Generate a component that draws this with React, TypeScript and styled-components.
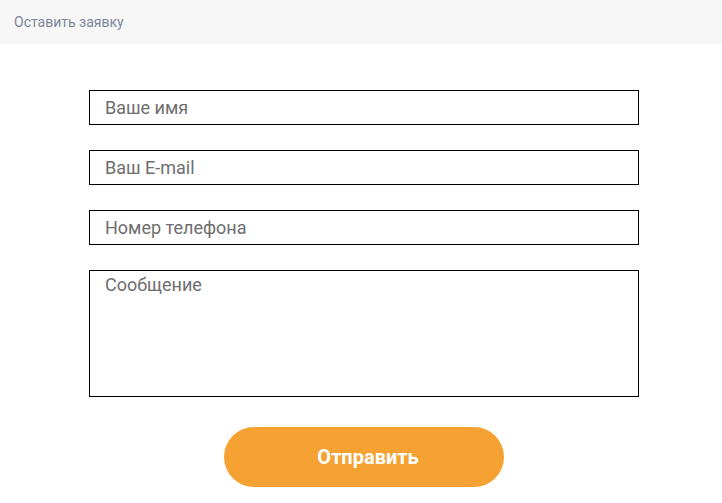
import React from "react";
import styled, { createGlobalStyle } from "styled-components";

const Global = createGlobalStyle`
  html, body { margin: 0; padding: 0; background: #fff; }
  body { font-family: Roboto, "Liberation Sans", Arial, sans-serif; }
  * { box-sizing: border-box; }
`;

const Header = styled.div`
  height: 44px;
  background: #f7f7f7;
  display: flex;
  align-items: center;
  padding-left: 14px;
  font-size: 14px;
  color: #80869a;
`;

const Form = styled.form`
  width: 550px;
  margin: 46px 0 0 89px;
  display: flex;
  flex-direction: column;
  gap: 25px;
`;

const Field = styled.input`
  width: 100%;
  height: 35px;
  border: 1px solid #000;
  border-radius: 0;
  padding: 0 15px;
  font-family: Roboto, "Liberation Sans", Arial, sans-serif;
  font-size: 18px;
  color: #333;
  outline: none;
  &::placeholder { color: #6e6e6e; opacity: 1; }
`;

const Area = styled.textarea`
  width: 100%;
  height: 127px;
  border: 1px solid #000;
  border-radius: 0;
  padding: 3px 15px;
  font-family: Roboto, "Liberation Sans", Arial, sans-serif;
  font-size: 18px;
  line-height: 22px;
  resize: none;
  outline: none;
  display: block;
  &::placeholder { color: #6e6e6e; opacity: 1; }
`;

const Actions = styled.div`
  display: flex;
  padding-left: 135px;
  margin-top: 5px;
`;

const Submit = styled.button`
  width: 280px;
  height: 60px;
  border: none;
  border-radius: 30px;
  padding: 0 0 0 8px;
  background: #f5a233;
  color: #fff;
  font-family: Roboto, "Liberation Sans", Arial, sans-serif;
  font-weight: 700;
  font-size: 20px;
  cursor: pointer;
`;

export default function App() {
  return (
    <>
      <Global />
      <Header>Оставить заявку</Header>
      <Form onSubmit={(e) => e.preventDefault()}>
        <Field placeholder="Ваше имя" />
        <Field placeholder="Ваш E-mail" />
        <Field placeholder="Номер телефона" />
        <Area placeholder="Сообщение" />
        <Actions>
          <Submit type="submit">Отправить</Submit>
        </Actions>
      </Form>
    </>
  );
}
